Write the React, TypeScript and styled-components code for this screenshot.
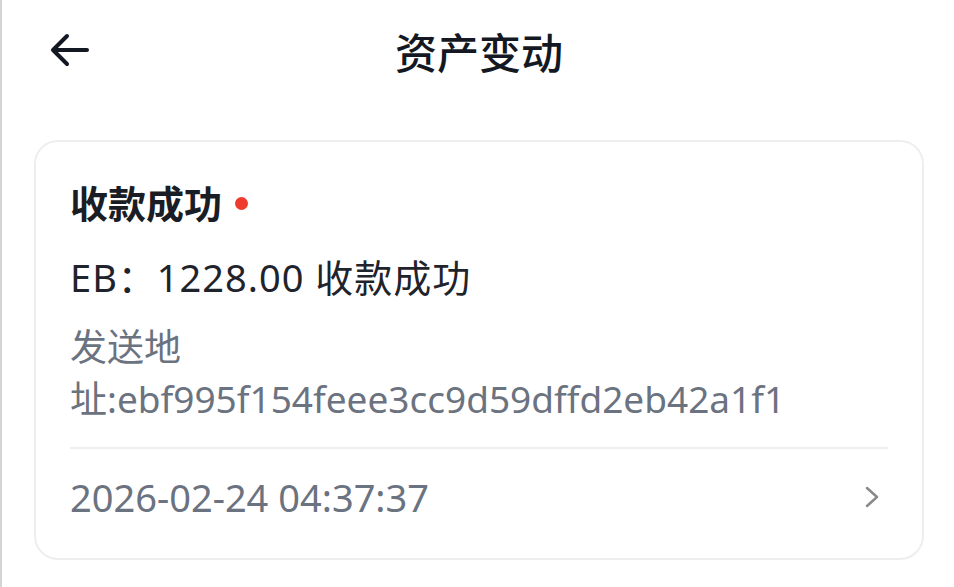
import React from "react";
import styled, { createGlobalStyle } from "styled-components";

const GlobalStyle = createGlobalStyle`
    html, body {
        margin: 0;
        padding: 0;
        background: #fff;
    }
    body {
        font-family: "Noto Sans", "Noto Sans CJK SC", sans-serif;
        border-left: 2px solid #d4d4d4;
        min-height: 587px;
        box-sizing: border-box;
    }
`;

const Page = styled.div`
    display: flex;
    flex-direction: column;
    padding: 0 30px 0 32px;
    color: #1c1f26;
`;

const Header = styled.header`
    display: grid;
    grid-template-columns: 80px 1fr 80px;
    align-items: center;
    height: 100px;
    padding-bottom: 40px;
`;

const BackButton = styled.button`
    display: flex;
    align-items: center;
    justify-content: flex-start;
    background: none;
    border: none;
    padding: 0 0 0 16px;
    cursor: pointer;
    color: #131823;
`;

const Title = styled.h1`
    margin: 0;
    text-align: center;
    font-size: 42px;
    font-weight: 500;
    color: #131823;
`;

const Card = styled.section`
    border: 2px solid #eeeeef;
    border-radius: 24px;
    padding: 36px 34px 13px 34px;
    display: flex;
    flex-direction: column;
`;

const CardTitle = styled.div`
    display: flex;
    align-items: center;
    gap: 13px;
    font-size: 38px;
    font-weight: 700;
    line-height: 50px;
    color: #1a1d24;
`;

const Dot = styled.span`
    width: 13px;
    height: 13px;
    border-radius: 50%;
    background: #ef3b2f;
`;

const Amount = styled.div`
    margin-top: 24px;
    font-size: 38px;
    line-height: 50px;
    letter-spacing: 1px;
    color: #1f232b;
`;

const Address = styled.div`
    margin-top: 19px;
    font-size: 37px;
    line-height: 52px;
    color: #6b7280;
`;

const Divider = styled.hr`
    border: none;
    border-top: 2px solid #eeeeef;
    margin: 22px 0 0 0;
`;

const FooterRow = styled.div`
    display: flex;
    align-items: center;
    justify-content: space-between;
    height: 96px;
    padding-right: 8px;
    font-size: 38px;
    color: #6b7280;
`;

function App() {
    return (
        <>
            <GlobalStyle />
            <Page>
                <Header>
                    <BackButton aria-label="back">
                        <svg width="40" height="34" viewBox="0 0 40 34" fill="none">
                            <path
                                d="M37 17H4M17 3L3 17l14 14"
                                stroke="currentColor"
                                strokeWidth="4"
                                strokeLinecap="round"
                                strokeLinejoin="round"
                            />
                        </svg>
                    </BackButton>
                    <Title>资产变动</Title>
                    <div />
                </Header>
                <Card>
                    <CardTitle>
                        收款成功
                        <Dot />
                    </CardTitle>
                    <Amount>EB：1228.00 收款成功</Amount>
                    <Address>发送地址:ebf995f154feee3cc9d59dffd2eb42a1f1</Address>
                    <Divider />
                    <FooterRow>
                        <span>2026-02-24 04:37:37</span>
                        <svg width="16" height="24" viewBox="0 0 16 24" fill="none">
                            <path
                                d="M3 3l10 9-10 9"
                                stroke="#8a8a8a"
                                strokeWidth="2.5"
                                strokeLinecap="round"
                                strokeLinejoin="round"
                            />
                        </svg>
                    </FooterRow>
                </Card>
            </Page>
        </>
    );
}

export default App;
